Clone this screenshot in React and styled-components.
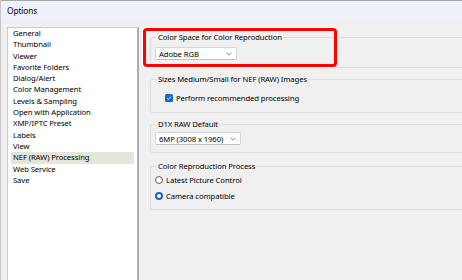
import React from "react";
import styled, { createGlobalStyle } from "styled-components";

const GlobalStyle = createGlobalStyle`
  html, body {
    margin: 0;
    padding: 0;
    background: #f0f0f0;
  }
  body {
    font-family: "Noto Sans", "Segoe UI", sans-serif;
    font-size: 7.7px;
    letter-spacing: -0.1px;
    color: #000;
  }
`;

const Window = styled.div`
  width: 462px;
  height: 280px;
  display: flex;
  flex-direction: column;
  overflow: hidden;
  background: #f0f0f0;
  border-left: 1px solid #c4c4c4;
  box-sizing: border-box;
`;

const TitleBar = styled.div`
  height: 20px;
  flex: none;
  display: flex;
  align-items: center;
  padding-left: 6px;
  background: #eef2f8;
  border-top: 1px solid #a8a8a8;
  box-sizing: border-box;
  font-size: 8.3px;
`;

const Body = styled.div`
  flex: 1;
  display: flex;
  padding-top: 7px;
  min-height: 0;
`;

const List = styled.ul`
  list-style: none;
  margin: 0 0 0 6px;
  padding: 0 3px;
  width: 132px;
  flex: none;
  box-sizing: border-box;
  background: #fff;
  border: 1px solid #cbcbcb;
  border-right: 2px solid #adadad;
  border-bottom: none;
`;

const Item = styled.li`
  height: 11.3px;
  line-height: 11.3px;
  padding-left: 2px;
  white-space: nowrap;
  background: ${({ $selected }) => ($selected ? "#e4e6da" : "transparent")};
`;

const Content = styled.div`
  flex: 1;
  margin-left: 11px;
  margin-right: -12px;
  padding-top: 5px;
  display: flex;
  flex-direction: column;
  gap: 6px;
`;

const GroupWrap = styled.div`
  position: relative;
  margin-top: ${({ $space }) => $space || 0}px;
`;

const Group = styled.fieldset`
  margin: 0;
  border: 1px solid #dcdcdc;
  border-radius: 2px;
  padding: ${({ $top }) => $top}px 4px ${({ $bottom }) => $bottom}px 4px;
  display: flex;
  flex-direction: column;
  gap: ${({ $gap }) => $gap || 0}px;
`;

const Legend = styled.legend`
  padding: 0 1px;
  margin-left: 2px;
  line-height: 10px;
`;

const Highlight = styled.div`
  position: absolute;
  left: -7px;
  top: -4px;
  width: 194px;
  height: 39px;
  box-sizing: border-box;
  border: 3px solid #ff0000;
  border-radius: 4px;
  box-shadow: 0 0 0 1px #ffffff;
  pointer-events: none;
`;

const Select = styled.div`
  width: ${({ $width }) => $width}px;
  height: 13px;
  box-sizing: border-box;
  display: flex;
  align-items: center;
  justify-content: space-between;
  padding: 0 4px 0 3px;
  background: #fff;
  border: 1px solid #d6d6d6;
  border-bottom-color: #c2c2c2;
  border-radius: 2px;
`;

const Chevron = () => (
  <svg width="6" height="4" viewBox="0 0 6 4">
    <polyline points="0.5,0.8 3,3.2 5.5,0.8" fill="none" stroke="#6a6a6a" strokeWidth="0.8" />
  </svg>
);

const Row = styled.div`
  display: flex;
  align-items: center;
  gap: 3px;
  height: 13px;
  padding-left: ${({ $indent }) => $indent || 0}px;
`;

const CheckBox = styled.span`
  width: 8px;
  height: 8px;
  border-radius: 1.5px;
  background: #1a66c2;
  display: flex;
  align-items: center;
  justify-content: center;
`;

const Radio = styled.span`
  width: 8px;
  height: 8px;
  box-sizing: border-box;
  border-radius: 50%;
  border: ${({ $checked }) => ($checked ? "2.5px solid #1a66c2" : "1px solid #606060")};
  background: #fff;
`;

const items = [
  "General",
  "Thumbnail",
  "Viewer",
  "Favorite Folders",
  "Dialog/Alert",
  "Color Management",
  "Levels & Sampling",
  "Open with Application",
  "XMP/IPTC Preset",
  "Labels",
  "View",
  "NEF (RAW) Processing",
  "Web Service",
  "Save",
];

export default function App() {
  return (
    <Window>
      <GlobalStyle />
      <TitleBar>Options</TitleBar>
      <Body>
        <List>
          {items.map((name) => (
            <Item key={name} $selected={name === "NEF (RAW) Processing"}>
              {name}
            </Item>
          ))}
        </List>
        <Content>
          <GroupWrap>
            <Group $top={5} $bottom={7}>
              <Legend>Color Space for Color Reproduction</Legend>
              <Select $width={82}>
                <span>Adobe RGB</span>
                <Chevron />
              </Select>
            </Group>
            <Highlight />
          </GroupWrap>
          <GroupWrap>
            <Group $top={7.5} $bottom={7.5}>
              <Legend>Sizes Medium/Small for NEF (RAW) Images</Legend>
              <Row $indent={10}>
                <CheckBox>
                  <svg width="6" height="6" viewBox="0 0 6 6">
                    <polyline points="1,3.2 2.4,4.5 5,1.5" fill="none" stroke="#fff" strokeWidth="0.9" />
                  </svg>
                </CheckBox>
                <span>Perform recommended processing</span>
              </Row>
            </Group>
          </GroupWrap>
          <GroupWrap>
            <Group $top={3} $bottom={7}>
              <Legend>D1X RAW Default</Legend>
              <Select $width={86}>
                <span>6MP (3008 x 1960)</span>
                <Chevron />
              </Select>
            </Group>
          </GroupWrap>
          <GroupWrap $space={2}>
            <Group $top={2.5} $bottom={6.5} $gap={3}>
              <Legend>Color Reproduction Process</Legend>
              <Row>
                <Radio />
                <span>Latest Picture Control</span>
              </Row>
              <Row>
                <Radio $checked />
                <span>Camera compatible</span>
              </Row>
            </Group>
          </GroupWrap>
        </Content>
      </Body>
    </Window>
  );
}
